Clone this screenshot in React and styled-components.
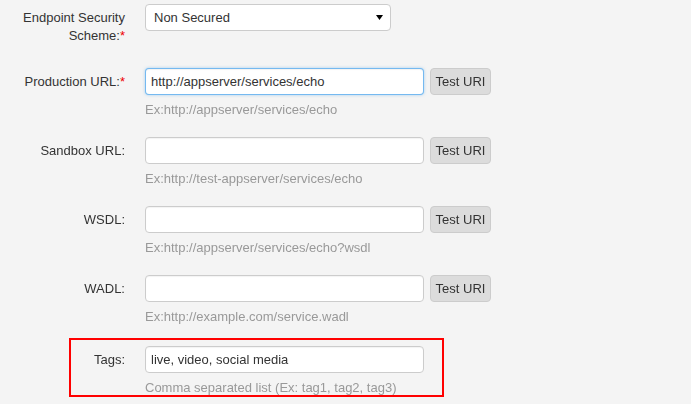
import styled, { createGlobalStyle } from "styled-components";

const GlobalStyle = createGlobalStyle`
	html, body {
		margin: 0;
		padding: 0;
		background: #f4f4f4;
	}
	body {
		font-family: "Liberation Sans", Arial, sans-serif;
		font-size: 13px;
		color: #333;
	}
`;

const Form = styled.form`
	padding-top: 4px;
	width: 691px;
	height: 404px;
	box-sizing: border-box;
	overflow: hidden;
`;

const Row = styled.div`
	display: grid;
	grid-template-columns: ${(props) => props.$labelWidth || 125}px 1fr;
	column-gap: 20px;
	margin-bottom: ${(props) => props.$gap ?? 17}px;
`;

const Label = styled.label`
	text-align: right;
	padding-top: 5px;
	line-height: 18px;
	color: #333;
`;

const Required = styled.span`
	color: #e00;
`;

const Controls = styled.div`
	display: flex;
	flex-direction: column;
`;

const InputLine = styled.div`
	display: flex;
	gap: 6px;
`;

const TextInput = styled.input`
	box-sizing: border-box;
	width: 279px;
	height: 27px;
	margin: 0;
	padding: 0 5px;
	border: 1px solid #ccc;
	border-radius: 4px;
	background: #fff;
	font-family: inherit;
	font-size: 13px;
	color: #333;
	outline: none;
	box-shadow: inset 0 1px 1px rgba(0, 0, 0, 0.05);

	&:focus {
		border-color: rgba(82, 168, 236, 0.8);
		box-shadow: inset 0 1px 1px rgba(0, 0, 0, 0.05), 0 0 3px rgba(82, 168, 236, 0.5);
	}
`;

const SelectBox = styled.div`
	position: relative;
	width: 246px;
`;

const Select = styled.select`
	appearance: none;
	box-sizing: border-box;
	width: 100%;
	height: 27px;
	margin: 0;
	padding: 0 8px;
	border: 1px solid #ccc;
	border-radius: 4px;
	background: #fff;
	font-family: inherit;
	font-size: 13px;
	color: #333;
	outline: none;
`;

const Caret = styled.svg`
	position: absolute;
	right: 8px;
	top: 11px;
	pointer-events: none;
`;

const TestButton = styled.button`
	box-sizing: border-box;
	width: 61px;
	height: 27px;
	padding: 0;
	border: 1px solid #ccc;
	border-radius: 4px;
	background: #dcdcdc;
	font-family: inherit;
	font-size: 13px;
	color: #333;
`;

const Help = styled.p`
	margin: 5px 0 0;
	line-height: 20px;
	color: #999;
`;

const Highlight = styled.div`
	box-sizing: border-box;
	margin: -6px 0 0 69px;
	width: 375px;
	height: 59px;
	padding-top: 6px;
	border: 2px solid #f00;
`;

const endpoints = [
	{ label: "Production URL:", required: true, value: "http://appserver/services/echo", help: "Ex:http://appserver/services/echo" },
	{ label: "Sandbox URL:", value: "", help: "Ex:http://test-appserver/services/echo" },
	{ label: "WSDL:", value: "", help: "Ex:http://appserver/services/echo?wsdl" },
	{ label: "WADL:", value: "", help: "Ex:http://example.com/service.wadl" },
];

function App() {
	return (
		<>
			<GlobalStyle />
			<Form onSubmit={(e) => e.preventDefault()}>
				<Row $gap={23}>
					<Label htmlFor="security">
						Endpoint Security Scheme:<Required>*</Required>
					</Label>
					<Controls>
						<SelectBox>
							<Select id="security" defaultValue="none">
								<option value="none">Non Secured</option>
								<option value="basic">Secured</option>
							</Select>
							<Caret width="7" height="5" viewBox="0 0 7 5">
								<path d="M0 0h7L3.5 5z" fill="#000" />
							</Caret>
						</SelectBox>
					</Controls>
				</Row>

				{endpoints.map((ep, i) => (
					<Row key={ep.label} $gap={i === endpoints.length - 1 ? 17 : 17}>
						<Label htmlFor={`ep-${i}`}>
							{ep.label}
							{ep.required && <Required>*</Required>}
						</Label>
						<Controls>
							<InputLine>
								<TextInput id={`ep-${i}`} type="text" defaultValue={ep.value} autoFocus={i === 0} />
								<TestButton type="button">Test URI</TestButton>
							</InputLine>
							<Help>{ep.help}</Help>
						</Controls>
					</Row>
				))}

				<Highlight>
					<Row $labelWidth={54} $gap={0}>
						<Label htmlFor="tags">Tags:</Label>
						<Controls>
							<TextInput id="tags" type="text" defaultValue="live, video, social media" />
							<Help>Comma separated list (Ex: tag1, tag2, tag3)</Help>
						</Controls>
					</Row>
				</Highlight>
			</Form>
		</>
	);
}

export default App;
